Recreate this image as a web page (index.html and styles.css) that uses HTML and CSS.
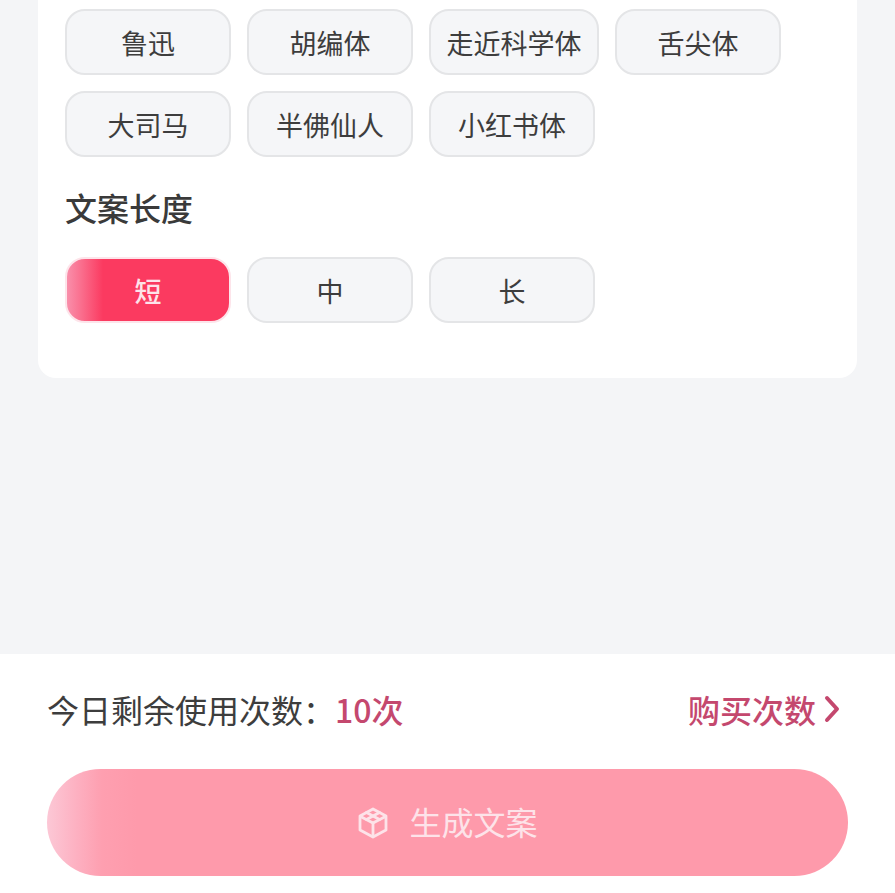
FILE: index.html
```html
<!DOCTYPE html>
<html lang="zh-CN">
<head>
  <meta charset="UTF-8">
  <meta name="viewport" content="width=device-width, initial-scale=1.0">
  <title>生成文案</title>
  <link rel="stylesheet" href="styles.css">
</head>
<body>
  <main class="content">
    <section class="card">
      <div class="chips">
        <button class="chip">鲁迅</button>
        <button class="chip">胡编体</button>
        <button class="chip">走近科学体</button>
        <button class="chip">舌尖体</button>
        <button class="chip">大司马</button>
        <button class="chip">半佛仙人</button>
        <button class="chip">小红书体</button>
      </div>
      <h2 class="section-title">文案长度</h2>
      <div class="chips">
        <button class="chip chip-active">短</button>
        <button class="chip">中</button>
        <button class="chip">长</button>
      </div>
    </section>
  </main>

  <footer class="footer">
    <div class="usage">
      <span class="usage-left">今日剩余使用次数：<span class="usage-count">10次</span></span>
      <a class="buy-link" href="#">购买次数
        <svg class="chevron" viewBox="0 0 16 28" width="16" height="28" fill="none" stroke="currentColor" stroke-width="4" stroke-linecap="round" stroke-linejoin="round">
          <path d="M3 3 L13 14 L3 25"/>
        </svg>
      </a>
    </div>
    <button class="generate">
      <svg class="cube" viewBox="0 0 32 32" width="32" height="32" fill="none" stroke="currentColor" stroke-width="2.8" stroke-linejoin="round" stroke-linecap="round">
        <path d="M16 2 L29 9 V23 L16 30 L3 23 V9 Z"/>
        <path d="M3.5 9.5 L16 16 L28.5 9.5"/>
        <path d="M16 16 V29.5"/>
        <path d="M9.5 5.5 L22.5 12.5"/>
        <path d="M22.5 5.5 L9.5 12.5"/>
      </svg>
      <span class="generate-label">生成文案</span>
    </button>
  </footer>
</body>
</html>
```

FILE: styles.css
```css
* {
  box-sizing: border-box;
}
html, body {
  margin: 0;
  padding: 0;
  height: 100%;
  overflow: hidden;
}
body {
  display: flex;
  flex-direction: column;
  background: #f4f5f7;
  color: #333;
  font-family: "Noto Sans CJK SC", "Liberation Sans", sans-serif;
}
.content {
  flex: 1;
  padding: 0 38px;
}
.card {
  background: #fff;
  padding: 9px 27px 55px;
  border-radius: 0 0 18px 18px;
}
.chips {
  display: flex;
  flex-wrap: wrap;
  gap: 16px;
}
.chip {
  min-width: 166px;
  height: 66px;
  padding: 0 15.5px;
  background: #f5f6f8;
  border: 2px solid #e4e5e7;
  border-radius: 20px;
  color: #3d3d3d;
  font-family: inherit;
  font-size: 27px;
  line-height: 1;
}
.chip-active {
  background: linear-gradient(to right, #f98fab 0, #fa6f8e 14px, #fb3a60 36px);
  border-color: #fde4ea;
  color: #fde3ea;
  font-weight: 500;
}
.section-title {
  margin: 31px 0 30px;
  font-size: 32px;
  font-weight: 500;
  line-height: 39px;
  color: #3a3a3a;
}
.footer {
  height: 239px;
  padding: 33px 47px 0 47px;
  background: #fff;
}
.usage {
  display: flex;
  justify-content: space-between;
  align-items: center;
  height: 44px;
  font-size: 32px;
  padding-right: 8px;
}
.usage-left {
  color: #3d3d3d;
}
.usage-count {
  color: #c4486e;
  font-weight: 500;
}
.buy-link {
  display: flex;
  align-items: center;
  gap: 8px;
  color: #c4486e;
  font-weight: 500;
  text-decoration: none;
}
.generate {
  display: flex;
  align-items: center;
  justify-content: center;
  gap: 20px;
  width: 801px;
  height: 107px;
  margin-top: 38px;
  background: linear-gradient(to right, #fcc8d6 0, #fdb0c1 30px, #fe9fb0 55px, #fe9aab 90px, #fe9aab 100%);
  border: none;
  border-radius: 54px;
  color: #fde3e9;
  font-family: inherit;
  font-size: 32px;
}
.generate-label {
  padding-bottom: 4px;
}
```
